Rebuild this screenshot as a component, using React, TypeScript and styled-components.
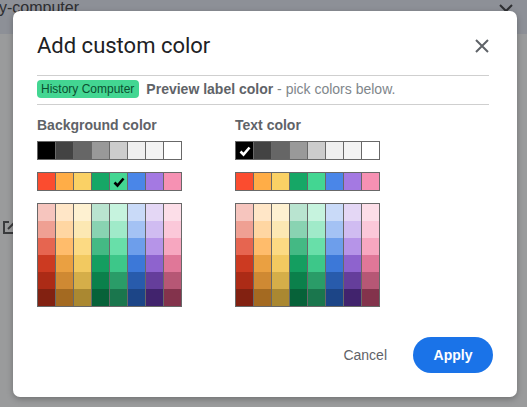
import React from 'react';
import styled, { createGlobalStyle } from 'styled-components';

const GlobalStyle = createGlobalStyle`
  html, body {
    margin: 0;
    padding: 0;
    overflow: hidden;
  }
  body {
    font-family: "Liberation Sans", Arial, sans-serif;
  }
`;

const GRAYS = ['#000000', '#434343', '#666666', '#999999', '#cccccc', '#efefef', '#f3f3f3', '#ffffff'];
const BRIGHTS = ['#fb4c2f', '#ffad47', '#fad165', '#16a766', '#43d692', '#4a86e8', '#a479e2', '#f691b3'];
const SHADES = [
  ['#f6c5be', '#ffe6c7', '#fef1d1', '#b9e4d0', '#c6f3de', '#c9daf8', '#e4d7f5', '#fcdee8'],
  ['#efa093', '#ffd6a2', '#fce8b3', '#89d3b2', '#a0eac9', '#a4c2f4', '#d0bcf1', '#fbc8d9'],
  ['#e66550', '#ffbc6b', '#fcda83', '#44b984', '#68dfa9', '#6d9eeb', '#b694e8', '#f7a7c0'],
  ['#cc3a21', '#eaa041', '#f2c960', '#149e60', '#3dc789', '#3c78d8', '#8e63ce', '#e07798'],
  ['#ac2b16', '#cf8933', '#d5ae49', '#0b804b', '#2a9c68', '#285bac', '#653e9b', '#b65775'],
  ['#822111', '#a46a21', '#aa8831', '#076239', '#1a764d', '#1c4587', '#41236d', '#83334c'],
];

const Page = styled.div`
  position: relative;
  width: 527px;
  height: 407px;
  background: #9a9b9c;
  overflow: hidden;
`;

const TopBar = styled.div`
  height: 34px;
  background: #8d9097;
  display: flex;
  justify-content: space-between;
  align-items: flex-start;
  padding-right: 14px;
  box-sizing: border-box;
`;

const PageTitle = styled.span`
  font-size: 16px;
  line-height: 16px;
  color: #2c2d30;
  margin-left: -1px;
`;

const TopClose = styled.svg`
  margin-top: 4px;
  color: #2f3033;
`;

const SideRail = styled.div`
  padding: 186px 0 0 3px;
  color: #3a3b3d;
`;

const Dialog = styled.div`
  position: absolute;
  left: 13px;
  top: 11px;
  width: 504px;
  height: 386px;
  box-sizing: border-box;
  padding: 21px 24px 24px 24px;
  background: #fff;
  border-radius: 7px;
  box-shadow: 0 2px 6px rgba(0, 0, 0, 0.28);
  display: flex;
  flex-direction: column;
`;

const Header = styled.div`
  display: flex;
  justify-content: space-between;
  align-items: center;
  height: 28px;
  margin: 0 4px 15px 0;
`;

const Title = styled.h2`
  margin: 0;
  font-family: Roboto, "Liberation Sans", sans-serif;
  font-weight: 400;
  font-size: 22px;
  line-height: 28px;
  color: #202124;
`;

const CloseIcon = styled.svg`
  color: #5f6368;
  margin-top: -1px;
`;

const PreviewRow = styled.div`
  display: flex;
  align-items: center;
  border-top: 1px solid #cfcfcf;
  border-bottom: 1px solid #cfcfcf;
  padding: 4px 0 6px;
  margin-right: 4px;
`;

const Chip = styled.span<{ $bg: string; $fg: string }>`
  background: ${p => p.$bg};
  color: ${p => p.$fg};
  font-size: 12px;
  line-height: 18px;
  height: 18px;
  padding: 0 5px 0 4px;
  border-radius: 4px;
`;

const PreviewText = styled.span`
  margin-left: 7px;
  font-size: 14px;
  color: #80868b;
  b {
    color: #5f6368;
  }
`;

const Columns = styled.div`
  display: flex;
  gap: 53px;
  padding-top: 12px;
`;

const Column = styled.div`
  display: flex;
  flex-direction: column;
  gap: 12px;
`;

const Label = styled.div`
  font-weight: 700;
  font-size: 14px;
  line-height: 16px;
  color: #5f6368;
  margin-bottom: -4px;
`;

const Strip = styled.div<{ $rows: number }>`
  display: grid;
  grid-template-columns: repeat(8, 17px);
  grid-template-rows: repeat(${p => p.$rows}, 17px);
  column-gap: 1px;
  padding: 1px;
  background: #686868;
  width: max-content;
`;

const Cell = styled.div<{ $color: string }>`
  background: ${p => p.$color};
  display: flex;
  align-items: center;
  justify-content: center;
`;

const Footer = styled.div`
  margin-top: auto;
  display: flex;
  justify-content: flex-end;
  align-items: center;
`;

const TextButton = styled.button`
  height: 36px;
  padding: 0 16px;
  margin-right: 10px;
  border: none;
  background: transparent;
  font-family: "Liberation Sans", Arial, sans-serif;
  font-size: 14px;
  color: #5f6368;
`;

const PrimaryButton = styled.button`
  width: 80px;
  height: 36px;
  border: none;
  border-radius: 18px;
  background: #1a73e8;
  color: #fff;
  font-family: "Liberation Sans", Arial, sans-serif;
  font-weight: 700;
  font-size: 14px;
`;

const Check = ({ color }: { color: string }) => (
  <svg width="12" height="12" viewBox="0 0 12 12">
    <path d="M1.5 6.5l3 3 6-7" fill="none" stroke={color} strokeWidth="2.6" />
  </svg>
);

type PaletteProps = { label: string; grayCheck?: number; brightCheck?: number };

const Palette = ({ label, grayCheck, brightCheck }: PaletteProps) => (
  <Column>
    <Label>{label}</Label>
    <Strip $rows={1}>
      {GRAYS.map((c, i) => (
        <Cell key={c} $color={c}>{i === grayCheck && <Check color="#fff" />}</Cell>
      ))}
    </Strip>
    <Strip $rows={1}>
      {BRIGHTS.map((c, i) => (
        <Cell key={c} $color={c}>{i === brightCheck && <Check color="#000" />}</Cell>
      ))}
    </Strip>
    <Strip $rows={6}>
      {SHADES.flat().map((c, i) => <Cell key={i} $color={c} />)}
    </Strip>
  </Column>
);

export default function App() {
  return (
    <Page>
      <GlobalStyle />
      <TopBar>
        <PageTitle>y-computer</PageTitle>
        <TopClose width="14" height="14" viewBox="0 0 14 14">
          <path d="M1 1l12 12M13 1L1 13" stroke="currentColor" strokeWidth="2" />
        </TopClose>
      </TopBar>
      <SideRail>
        <svg width="12" height="14" viewBox="0 0 12 14">
          <path d="M6 2H1v11h10V8" fill="none" stroke="currentColor" strokeWidth="2" />
          <path d="M5 9l6-6" stroke="currentColor" strokeWidth="2" />
        </svg>
      </SideRail>

      <Dialog>
        <Header>
          <Title>Add custom color</Title>
          <CloseIcon width="14" height="14" viewBox="0 0 14 14">
            <path d="M1 1l12 12M13 1L1 13" stroke="currentColor" strokeWidth="2" />
          </CloseIcon>
        </Header>
        <PreviewRow>
          <Chip $bg="#43d692" $fg="#0b4f30">History Computer</Chip>
          <PreviewText><b>Preview label color</b> - pick colors below.</PreviewText>
        </PreviewRow>
        <Columns>
          <Palette label="Background color" brightCheck={4} />
          <Palette label="Text color" grayCheck={0} />
        </Columns>
        <Footer>
          <TextButton>Cancel</TextButton>
          <PrimaryButton>Apply</PrimaryButton>
        </Footer>
      </Dialog>
    </Page>
  );
}
